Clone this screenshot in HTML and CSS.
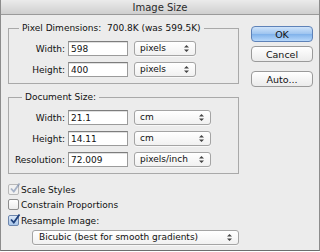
FILE: index.html
```html
<!DOCTYPE html>
<html lang="en">
<head>
    <meta charset="UTF-8">
    <title>Image Size</title>
    <link rel="stylesheet" href="styles.css">
</head>
<body>
    <div class="window">
        <div class="titlebar">Image Size</div>
        <div class="content">
            <div class="main">
                <!-- Pixel Dimensions -->
                <fieldset class="group">
                    <legend>Pixel Dimensions:&nbsp; 700.8K (was 599.5K)</legend>
                    <div class="row">
                        <label>Width:</label>
                        <input type="text" class="field" value="598">
                        <div class="select short">pixels<span class="arrows"></span></div>
                    </div>
                    <div class="row">
                        <label>Height:</label>
                        <input type="text" class="field" value="400">
                        <div class="select short">pixels<span class="arrows"></span></div>
                    </div>
                </fieldset>

                <!-- Document Size -->
                <fieldset class="group doc">
                    <legend>Document Size:</legend>
                    <div class="row">
                        <label>Width:</label>
                        <input type="text" class="field" value="21.1">
                        <div class="select">cm<span class="arrows"></span></div>
                    </div>
                    <div class="row">
                        <label>Height:</label>
                        <input type="text" class="field" value="14.11">
                        <div class="select">cm<span class="arrows"></span></div>
                    </div>
                    <div class="row">
                        <label>Resolution:</label>
                        <input type="text" class="field" value="72.009">
                        <div class="select">pixels/inch<span class="arrows"></span></div>
                    </div>
                </fieldset>

                <div class="check disabled"><span class="box on"></span>Scale Styles</div>
                <div class="check"><span class="box"></span>Constrain Proportions</div>
                <div class="check resample"><span class="box on"></span>Resample Image:</div>
                <div class="select wide">Bicubic (best for smooth gradients)<span class="arrows"></span></div>
            </div>

            <div class="buttons">
                <button class="btn primary">OK</button>
                <button class="btn">Cancel</button>
                <button class="btn auto">Auto...</button>
            </div>
        </div>
    </div>
</body>
</html>
```

FILE: styles.css
```css
* {
    margin: 0;
    padding: 0;
    box-sizing: border-box;
}

body {
    width: 320px;
    height: 252px;
    overflow: hidden;
    font-family: "DejaVu Sans", sans-serif;
    font-size: 9px;
    color: #111;
}

.window {
    width: 320px;
    height: 251px;
    background: #ececec;
    border: 1px solid #8c8c8c;
    border-top: none;
    border-bottom-color: #6e6e6e;
}

.titlebar {
    height: 15px;
    line-height: 15px;
    text-align: center;
    font-size: 10px;
    color: #2a2a2a;
    background: linear-gradient(#ebebeb, #cfcfcf);
    border-bottom: 1px solid #9a9a9a;
}

.content {
    display: flex;
    padding-left: 7px;
}

.main {
    width: 231px;
    padding-top: 7px;
}

.group {
    border: 1px solid #a9a9a9;
    padding: 7px 0 6px;
}

.group legend {
    margin-left: 10px;
    padding: 0 3px;
    line-height: 12px;
}

.group.doc {
    margin-top: 7px;
}

.group.doc legend {
    margin-left: 13px;
}

.row {
    display: flex;
    align-items: center;
    height: 15px;
}

.row + .row {
    margin-top: 6px;
}

.row label {
    width: 56px;
    text-align: right;
    margin-right: 3px;
}

.field {
    width: 60px;
    height: 15px;
    border: 1px solid #9b9b9b;
    border-top-color: #7d7d7d;
    background: #fff;
    font: inherit;
    color: #111;
    padding-left: 2px;
    outline: none;
    box-shadow: inset 0 1px 0 #e0e0e0;
}

.select {
    position: relative;
    width: 77px;
    height: 15px;
    margin-left: 6px;
    padding-left: 5px;
    line-height: 13px;
    border: 1px solid #a4a4a4;
    border-radius: 3px;
    background: linear-gradient(#ffffff, #f1f1f1);
    box-shadow: 0 1px 0 #f8f8f8;
}

.select.short {
    width: 62px;
}

.select.wide {
    width: 207px;
    margin: 2px 0 0 24px;
    padding-left: 6px;
}

/* up/down arrows of a popup button */
.arrows {
    position: absolute;
    right: 6px;
    top: 3px;
    width: 5px;
    height: 7px;
    background: url("data:image/svg+xml,%3Csvg xmlns='http://www.w3.org/2000/svg' width='5' height='7'%3E%3Cpath d='M2.5 0L5 2.6H0z M2.5 7L5 4.4H0z' fill='%23444'/%3E%3C/svg%3E") no-repeat;
}

.check {
    display: flex;
    align-items: center;
    height: 15px;
    gap: 2px;
}

.check.disabled {
    margin-top: 8px;
}

.check.resample {
    margin-top: 1px;
}

.box {
    width: 11px;
    height: 11px;
    border: 1px solid #8e8e8e;
    border-radius: 2px;
    background: linear-gradient(#ffffff, #ececec);
    position: relative;
}

.box.on::after {
    content: "";
    position: absolute;
    left: 0;
    top: -3px;
    width: 12px;
    height: 12px;
    background: url("data:image/svg+xml,%3Csvg xmlns='http://www.w3.org/2000/svg' width='12' height='12'%3E%3Cpath d='M2 6.5L4.8 9.5L10.5 1.5' fill='none' stroke='%231e3f7a' stroke-width='1.8'/%3E%3C/svg%3E") no-repeat;
}

.check.disabled .box {
    border-color: #b8b8b8;
    background: #f1f1f1;
}

.check.disabled .box.on::after {
    opacity: 0.35;
}

.check.resample .box {
    background: linear-gradient(#dce8f6, #a9c6ea);
    border-color: #6d86ad;
}

.buttons {
    display: flex;
    flex-direction: column;
    margin-left: 12px;
    padding-top: 11px;
}

.btn {
    width: 62px;
    height: 16px;
    font: inherit;
    font-size: 9.5px;
    color: #111;
    border: 1px solid #9a9a9a;
    border-radius: 4px;
    background: linear-gradient(#ffffff, #ebebeb);
    margin-bottom: 4px;
}

.btn.primary {
    border-color: #5e82b8;
    background: linear-gradient(#cfe3fa 0%, #9dc4ef 50%, #7fb1ea 51%, #b7d8fb 100%);
}

.btn.auto {
    margin-top: 5px;
}
```
